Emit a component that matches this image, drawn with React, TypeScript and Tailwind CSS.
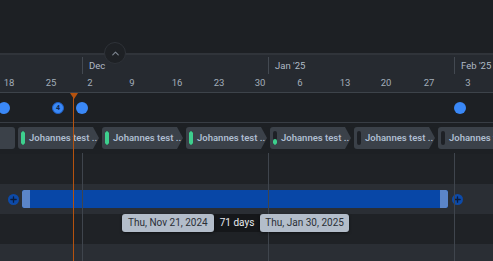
import { ChevronUp, Plus } from 'lucide-react'

const months = [
  { label: 'Dec', x: 82 },
  { label: "Jan '25", x: 268 },
  { label: "Feb '25", x: 454 },
]

const days = [
  { label: '18', x: 9 },
  { label: '25', x: 51 },
  { label: '2', x: 90 },
  { label: '9', x: 132 },
  { label: '16', x: 177 },
  { label: '23', x: 219 },
  { label: '30', x: 260 },
  { label: '6', x: 300 },
  { label: '13', x: 345 },
  { label: '20', x: 386 },
  { label: '27', x: 429 },
  { label: '3', x: 468 },
]

// progress of each sprint chip (indicator fill)
const chips = [
  { fill: 1 },
  { fill: 1 },
  { fill: 1 },
  { fill: 0.45 },
  { fill: 0 },
  { fill: 0 },
]

function Chip({ fill }: { fill: number }) {
  return (
    <div className="shrink-0 w-[81px] h-[22px] bg-[#3b4149] rounded-l-[3px] flex items-center overflow-hidden [clip-path:polygon(0_0,75px_0,81px_50%,75px_100%,0_100%)]">
      <div className="shrink-0 ml-[3px] w-[4px] h-[14px] rounded-full bg-[#1e2126] flex flex-col justify-end overflow-hidden">
        <div className="w-full bg-[#3ecf8e] rounded-full" style={{ height: `${fill * 100}%` }} />
      </div>
      <span className="ml-[4px] text-[9.5px] font-semibold text-[#aebdd0] whitespace-nowrap">Johannes test ..</span>
    </div>
  )
}

export default function App() {
  return (
    <div className="relative w-[493px] h-[261px] overflow-hidden bg-[#1d2024] font-['Roboto','Liberation_Sans',sans-serif]">
      <div className="h-[53px]" />

      {/* timescale header */}
      <div className="h-[40px] bg-[#262a30] border-t-2 border-[#30343a] border-b border-b-[#3d434a]">
        <div className="relative h-[19px]">
          {months.map((m) => (
            <div key={m.label} className="absolute top-[2px] h-[17px] border-l border-[#434951]" style={{ left: m.x }}>
              <span className="absolute left-[6px] top-[3px] text-[9.5px] leading-[12px] text-[#b0bac6] whitespace-nowrap">{m.label}</span>
            </div>
          ))}
        </div>
        <div className="relative h-[18px]">
          {days.map((d) => (
            <span
              key={d.label}
              className="absolute top-[3px] -translate-x-1/2 text-[9.5px] leading-[12px] text-[#a3aebb]"
              style={{ left: d.x }}
            >
              {d.label}
            </span>
          ))}
        </div>
      </div>

      {/* milestones */}
      <div className="relative h-[30px] border-b border-[#383d44]">
        <div className="absolute left-[-2px] top-[9px] w-[12px] h-[12px] rounded-full bg-[#3a88f7]" />
        <div className="absolute left-[52px] top-[9px] w-[12px] h-[12px] rounded-full bg-[#3a88f7] border border-[#1f5fc4] flex items-center justify-center text-[7px] font-bold text-[#10284d]">4</div>
        <div className="absolute left-[76px] top-[9px] w-[12px] h-[12px] rounded-full bg-[#3a88f7]" />
        <div className="absolute left-[454px] top-[9px] w-[12px] h-[12px] rounded-full bg-[#3a88f7]" />
      </div>

      {/* sprints */}
      <div className="h-[31px] pt-[4px] flex gap-[3px]">
        <div className="shrink-0 w-[15px] h-[22px] bg-[#3b4149] rounded-r-[3px]" />
        {chips.map((c, i) => (
          <Chip key={i} fill={c.fill} />
        ))}
      </div>

      {/* rows */}
      <div className="h-[30px] bg-[#1f2226]" />
      <div className="h-[30px] bg-[#2a2e34] flex items-center">
        <div className="ml-[8px] w-[11px] h-[11px] rounded-full bg-[#0d4aa8] flex items-center justify-center text-[#0a1c3d]">
          <Plus size={9} strokeWidth={3.5} />
        </div>
        <div className="ml-[3px] w-[426px] h-[18px] rounded-[2px] bg-[#0847a7] flex justify-between overflow-hidden">
          <div className="w-[8px] h-full bg-[#5b85c8] rounded-l-[2px]" />
          <div className="w-[8px] h-full bg-[#5b85c8] rounded-r-[2px]" />
        </div>
        <div className="ml-[4px] w-[11px] h-[11px] rounded-full bg-[#0d4aa8] flex items-center justify-center text-[#0a1c3d]">
          <Plus size={9} strokeWidth={3.5} />
        </div>
      </div>
      <div className="h-[30px] bg-[#1f2226]">
        <div className="relative z-20 ml-[122px] flex h-[18px] text-[10px] leading-[18px]">
          <span className="px-[6px] rounded-[3px] bg-[#b3bdca] text-[#2a2f36] shadow-[0_1px_3px_rgba(0,0,0,0.5)] z-10">Thu, Nov 21, 2024</span>
          <span className="px-[6px] bg-[#15171a] text-[#e8ebef]">71 days</span>
          <span className="px-[5px] rounded-[3px] bg-[#b3bdca] text-[#2a2f36] shadow-[0_1px_3px_rgba(0,0,0,0.5)]">Thu, Jan 30, 2025</span>
        </div>
      </div>
      <div className="h-[30px] bg-[#2a2e34]" />

      {/* month lines through the rows */}
      {months.map((m) => (
        <div key={m.label} className="absolute top-[153px] bottom-0 w-px bg-[#3f454d]" style={{ left: m.x }} />
      ))}

      {/* today marker */}
      <div className="absolute left-[73px] top-[93px] bottom-0 w-px bg-[#b5520e]" />
      <div className="absolute left-[70px] top-[93px] w-0 h-0 border-l-[4px] border-r-[4px] border-t-[6px] border-l-transparent border-r-transparent border-t-[#b5520e]" />

      {/* collapse toggle */}
      <button className="absolute left-[104px] top-[42px] w-[22px] h-[22px] rounded-full bg-[#1e2125] border border-[#2e3238] flex items-center justify-center text-[#7d8590]">
        <ChevronUp size={11} strokeWidth={2.5} />
      </button>
    </div>
  )
}
